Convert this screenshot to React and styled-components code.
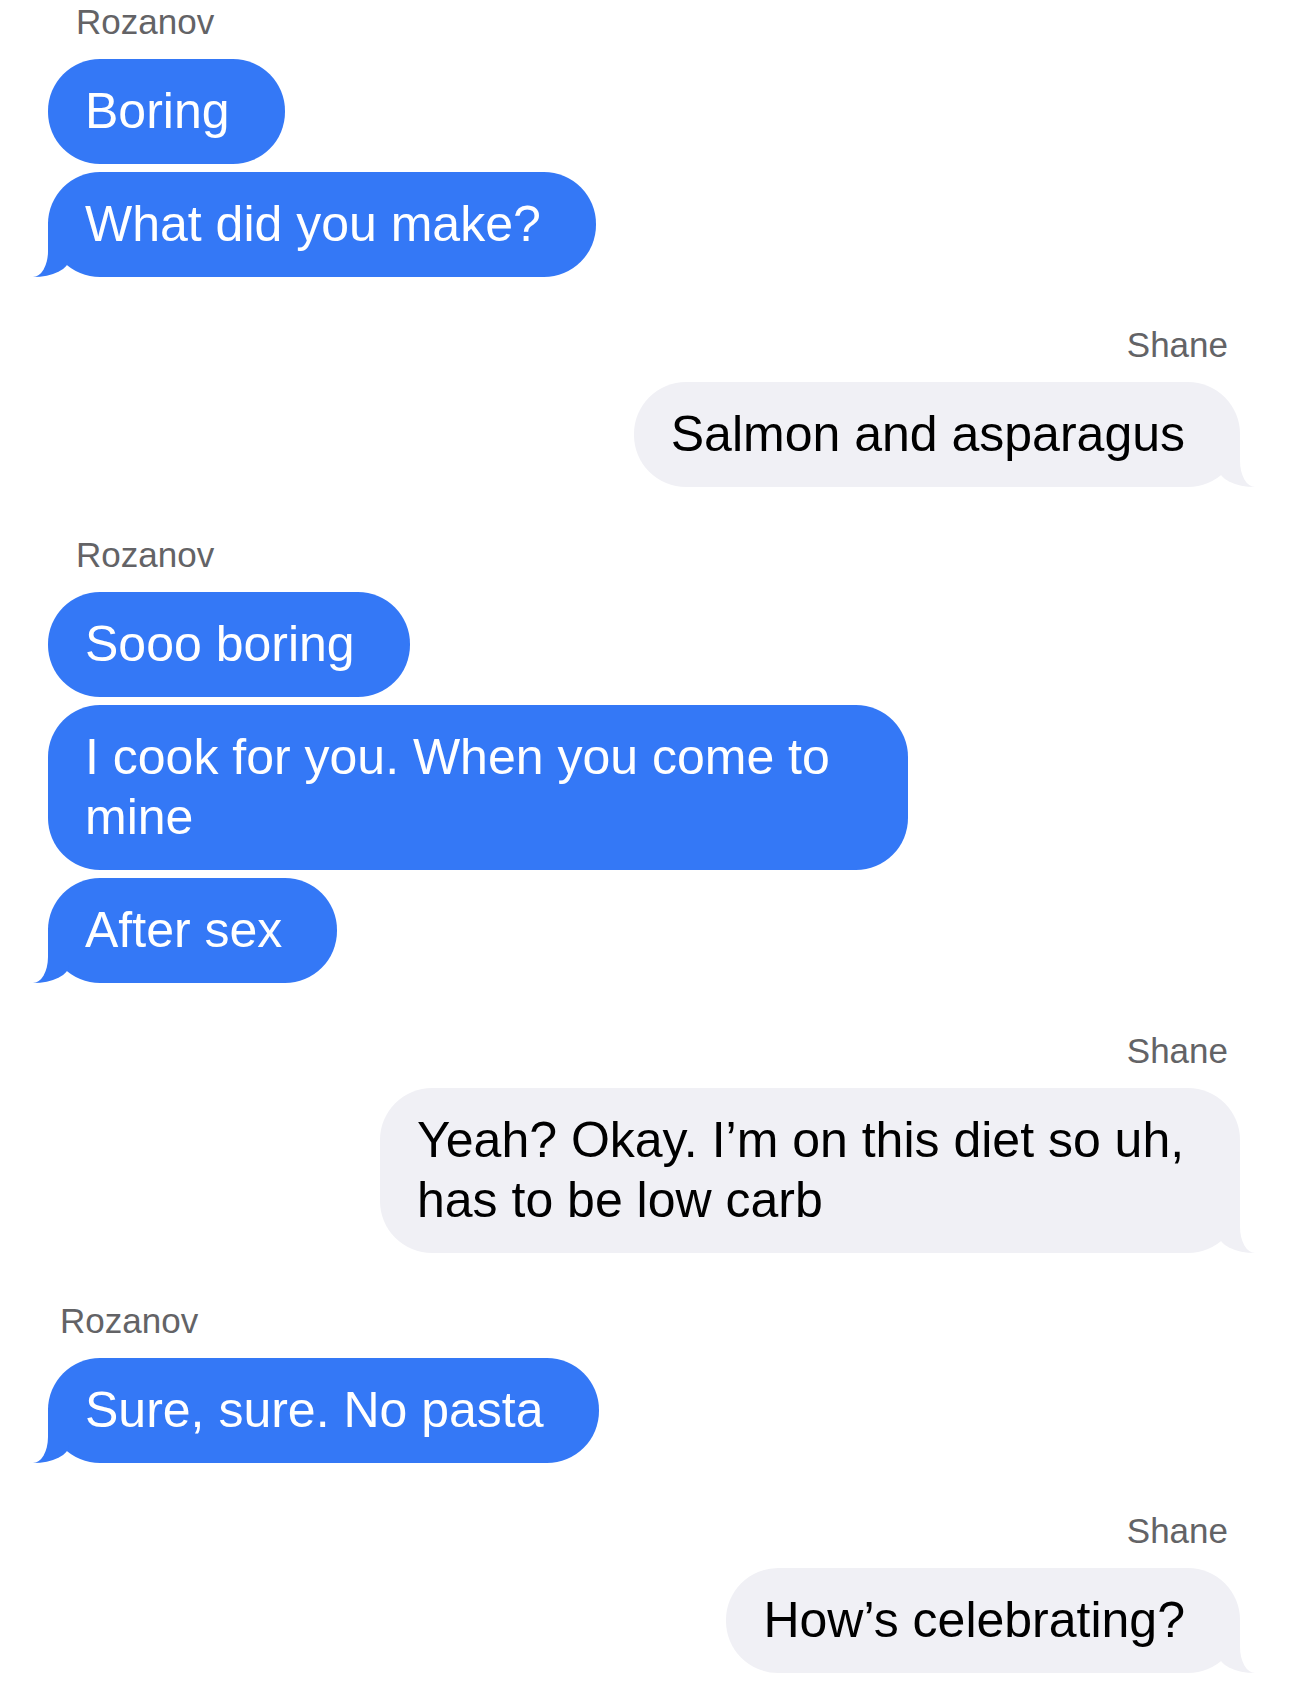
import styled, { createGlobalStyle, css } from "styled-components";

const GlobalStyle = createGlobalStyle`
  html, body {
    margin: 0;
    padding: 0;
    background: #ffffff;
  }
  body {
    font-family: "Liberation Sans", Arial, sans-serif;
    -webkit-font-smoothing: antialiased;
  }
`;

const BLUE = "#3478f6";
const GRAY = "#f0f0f5";

const thread = [
  { from: "Rozanov", bubbles: ["Boring", "What did you make?"] },
  { from: "Shane", me: true, bubbles: ["Salmon and asparagus"] },
  {
    from: "Rozanov",
    bubbles: ["Sooo boring", "I cook for you. When you come to mine", "After sex"],
  },
  {
    from: "Shane",
    me: true,
    bubbles: ["Yeah? Okay. I\u2019m on this diet so uh, has to be low carb"],
  },
  { from: "Rozanov", indent: 12, bubbles: ["Sure, sure. No pasta"] },
  { from: "Shane", me: true, bubbles: ["How\u2019s celebrating?"] },
];

const App = () => {
  return (
    <>
      <GlobalStyle />
      <Conversation>
        {thread.map((group, i) => (
          <Group key={i} $me={group.me}>
            <Sender $me={group.me} $indent={group.indent}>
              {group.from}
            </Sender>
            {group.bubbles.map((text, j) => (
              <Bubble
                key={j}
                $me={group.me}
                $tail={j === group.bubbles.length - 1}
              >
                {text}
              </Bubble>
            ))}
          </Group>
        ))}
      </Conversation>
    </>
  );
};

export default App;

const Conversation = styled.div`
  display: flex;
  flex-direction: column;
  gap: 50px;
  padding: 4px 50px 0 48px;
  width: 1290px;
  box-sizing: border-box;
`;

const Group = styled.div`
  display: flex;
  flex-direction: column;
  align-items: ${(p) => (p.$me ? "flex-end" : "flex-start")};
  gap: 8px;
`;

const Sender = styled.div`
  font-size: 35px;
  line-height: 36px;
  color: #636366;
  margin-bottom: 11px;
  padding: ${(p) => (p.$me ? "0 12px 0 0" : `0 0 0 ${p.$indent ?? 28}px`)};
`;

const leftTail = css`
  &::before {
    content: "";
    position: absolute;
    left: -15px;
    bottom: 0;
    width: 36px;
    height: 55px;
    background: ${BLUE};
    border-bottom-right-radius: 36px 18px;
  }
  &::after {
    content: "";
    position: absolute;
    left: -40px;
    bottom: 0;
    width: 40px;
    height: 60px;
    background: #ffffff;
    border-bottom-right-radius: 15px 26px;
  }
`;

const rightTail = css`
  &::before {
    content: "";
    position: absolute;
    right: -15px;
    bottom: 0;
    width: 36px;
    height: 55px;
    background: ${GRAY};
    border-bottom-left-radius: 36px 18px;
  }
  &::after {
    content: "";
    position: absolute;
    right: -40px;
    bottom: 0;
    width: 40px;
    height: 60px;
    background: #ffffff;
    border-bottom-left-radius: 15px 26px;
  }
`;

const Bubble = styled.div`
  position: relative;
  box-sizing: border-box;
  max-width: 860px;
  padding: 22px 55px 23px 37px;
  border-radius: 52px;
  font-size: 50px;
  line-height: 60px;
  background: ${(p) => (p.$me ? GRAY : BLUE)};
  color: ${(p) => (p.$me ? "#000000" : "#ffffff")};
  ${(p) => p.$tail && (p.$me ? rightTail : leftTail)}
`;
